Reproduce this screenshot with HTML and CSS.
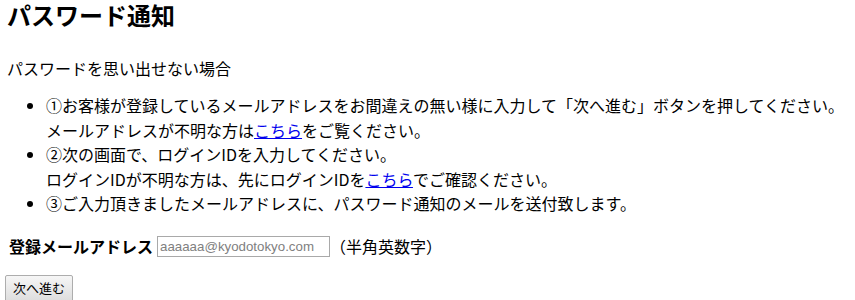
FILE: index.html
```html
<!DOCTYPE html>
<html lang="ja">
<head>
    <meta charset="UTF-8">
    <meta name="viewport" content="width=device-width, initial-scale=1.0">
    <title>パスワード通知</title>
    <link rel="stylesheet" href="styles.css">
</head>
<body>

    <div class="page">
        <h2>パスワード通知</h2>

        <p class="lead">パスワードを思い出せない場合</p>

        <ul class="steps">
            <li>①お客様が登録しているメールアドレスをお間違えの無い様に入力して「次へ進む」ボタンを押してください。<br>メールアドレスが不明な方は<a href="#">こちら</a>をご覧ください。</li>
            <li>②次の画面で、ログインIDを入力してください。<br>ログインIDが不明な方は、先にログインIDを<a href="#">こちら</a>でご確認ください。</li>
            <li>③ご入力頂きましたメールアドレスに、パスワード通知のメールを送付致します。</li>
        </ul>

        <form id="mailForm">
            <div class="form-row">
                <label for="mail" class="form-label">登録メールアドレス</label>
                <input type="text" id="mail" class="mail-input" placeholder="aaaaaa@kyodotokyo.com">
                <span class="note">（半角英数字）</span>
            </div>

            <div class="actions">
                <button type="submit" class="next-btn">次へ進む</button>
            </div>
        </form>
    </div>

</body>
</html>
```

FILE: styles.css
```css
/* General Styles */
body {
    font-family: "Noto Sans CJK JP", "Noto Sans", sans-serif;
    font-size: 16px;
    color: #000;
    background-color: #fff;
    margin: 0;
    padding: 0;
}

.page {
    padding: 0 0 0 7px;
}

h2 {
    margin: 0;
    font-size: 24px;
    line-height: 30px;
    font-weight: bold;
}

.lead {
    margin: 26px 0 0;
    line-height: 24px;
}

.steps {
    margin: 13px 0 0;
    padding-left: 39px;
    line-height: 24.5px;
    white-space: nowrap;
}

.steps a {
    color: #0000ee;
    text-decoration: underline;
}

/* Form */
.form-row {
    margin-top: 18px;
    height: 24px;
    display: flex;
    align-items: center;
}

.form-label {
    font-weight: bold;
    margin-left: 2px;
    margin-right: 4px;
}

.mail-input {
    width: 173px;
    height: 21px;
    box-sizing: border-box;
    border: 1px solid #a9a9a9;
    padding: 1px 2px;
    font-family: "Liberation Sans", Arial, sans-serif;
    font-size: 13.3px;
    margin: 1px 0 0;
}

.mail-input::placeholder {
    color: #808080;
}

.actions {
    margin-top: 16px;
    margin-left: -2px;
}

.next-btn {
    font-family: "Noto Sans CJK JP", sans-serif;
    font-size: 13px;
    line-height: 18px;
    padding: 3px 7px 4px;
    width: 68px;
    border: 1px solid #adadad;
    border-radius: 2px;
    background: linear-gradient(#f6f6f6, #dddddd);
    color: #000;
    cursor: pointer;
}
```
